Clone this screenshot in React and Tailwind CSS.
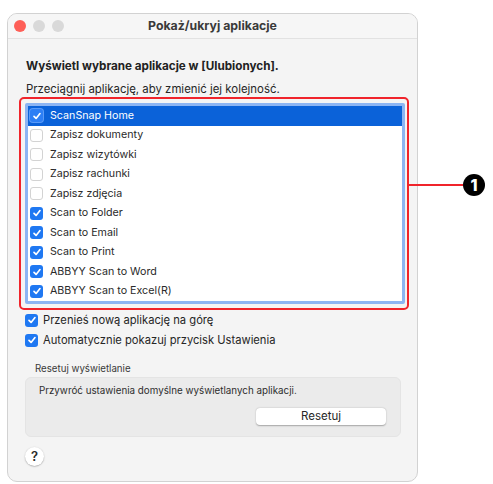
import React from "react";

const Check = () => (
  <svg viewBox="0 0 12 12" className="w-[10px] h-[10px]">
    <path d="M2.4 6.4 4.9 8.9 9.6 3.1" fill="none" stroke="white" strokeWidth="2" strokeLinecap="round" strokeLinejoin="round" />
  </svg>
);

function Box({ checked, selected }) {
  if (checked)
    return (
      <span className={"w-[13px] h-[13px] rounded-[3px] flex items-center justify-center shrink-0 " + (selected ? "bg-[#2d7ff5] ring-1 ring-[#5a9bf8]" : "bg-[#1f78f2]")}>
        <Check />
      </span>
    );
  return <span className="w-[13px] h-[13px] rounded-[3px] bg-white border border-[#d3d3d3] shrink-0" />;
}

const items = [
  ["ScanSnap Home", true],
  ["Zapisz dokumenty", false],
  ["Zapisz wizytówki", false],
  ["Zapisz rachunki", false],
  ["Zapisz zdjęcia", false],
  ["Scan to Folder", true],
  ["Scan to Email", true],
  ["Scan to Print", true],
  ["ABBYY Scan to Word", true],
  ["ABBYY Scan to Excel(R)", true],
];

export default function App() {
  return (
    <div
      className="relative w-[493px] h-[484px] bg-white overflow-hidden pt-[13px] pl-[7px] text-[#262626]"
      style={{ fontFamily: "Inter, 'Liberation Sans', sans-serif" }}
    >
      <div className="w-[411px] h-[469px] rounded-[10px] border border-[#d2d2d2] bg-[#f4f4f4] flex flex-col overflow-hidden">
        <div className="h-[25px] shrink-0 grid grid-cols-[1fr_auto_1fr] items-center border-b border-[#e2e2e2] bg-[#f6f6f6]">
          <div className="flex items-center gap-[7px] pl-[6px]">
            <span className="w-[12px] h-[12px] rounded-full bg-[#fe5f57]" />
            <span className="w-[12px] h-[12px] rounded-full bg-[#d9d9d9]" />
            <span className="w-[12px] h-[12px] rounded-full bg-[#d9d9d9]" />
          </div>
          <div className="text-[12.3px] font-bold leading-[16px] text-[#3a3a3a]">Pokaż/ukryj aplikacje</div>
          <div />
        </div>

        <div className="flex flex-col pl-[11px] pr-[8px]">
          <div className="ml-[7px] mt-[19px] text-[11.7px] font-bold leading-[16px] text-[#222]">
            Wyświetl wybrane aplikacje w [Ulubionych].
          </div>
          <div className="ml-[7px] mt-[7px] text-[11.4px] leading-[16px] text-[#262626]">
            Przeciągnij aplikację, aby zmienić jej kolejność.
          </div>

          <div className="border-2 border-[#f0242b] rounded-[5px] pl-[4px] pr-[2px] pt-[4px] pb-[4px]">
            <div className="border-[3px] border-[#8db5f3] rounded-[2px] bg-white flex flex-col">
              {items.map(([label, checked], i) => (
                <div
                  key={label}
                  className={
                    "h-[19.5px] flex items-center pl-[2px] gap-[7px] text-[10.7px] " +
                    (i === 0 ? "bg-[#0b62d9] text-white" : "text-[#2a2a2a]")
                  }
                >
                  <Box checked={checked} selected={i === 0} />
                  <span>{label}</span>
                </div>
              ))}
            </div>
          </div>

          <div className="h-[20px] flex items-center ml-[6px] gap-[5px] text-[11.2px] text-[#262626]">
            <Box checked />
            <span>Przenieś nową aplikację na górę</span>
          </div>
          <div className="h-[20px] flex items-center ml-[6px] gap-[5px] text-[11.2px] text-[#262626]">
            <Box checked />
            <span>Automatycznie pokazuj przycisk Ustawienia</span>
          </div>

          <div className="ml-[16px] mt-[12px] text-[9.7px] leading-[14px] text-[#3a3a3a]">Resetuj wyświetlanie</div>
          <div className="ml-[6px] mt-[1px] w-[376px] h-[60px] rounded-[6px] bg-[#ebebeb] border border-[#e4e4e4] flex flex-col pt-[6px] pl-[13px] pr-[14px]">
            <div className="text-[9.8px] leading-[14px] text-[#2e2e2e]">Przywróć ustawienia domyślne wyświetlanych aplikacji.</div>
            <button className="self-end mt-[10px] w-[130px] h-[17px] rounded-[4px] bg-white shadow-[0_0.5px_1.5px_rgba(0,0,0,0.3)] text-[11.5px] leading-[17px] text-[#262626]">
              Resetuj
            </button>
          </div>

          <div className="ml-[6px] mt-[10px] w-[19px] h-[19px] rounded-full bg-white shadow-[0_0.5px_1.5px_rgba(0,0,0,0.35)] flex items-center justify-center text-[13px] font-semibold text-[#2a2a2a]">
            ?
          </div>
        </div>
      </div>

      <div className="absolute left-[409px] top-[184px] w-[54px] h-[2px] bg-[#f0242b]" />
      <div className="absolute left-[463px] top-[174px] w-[22px] h-[22px] rounded-full bg-black flex items-center justify-center text-white text-[16px] font-extrabold leading-none">
        1
      </div>
    </div>
  );
}
